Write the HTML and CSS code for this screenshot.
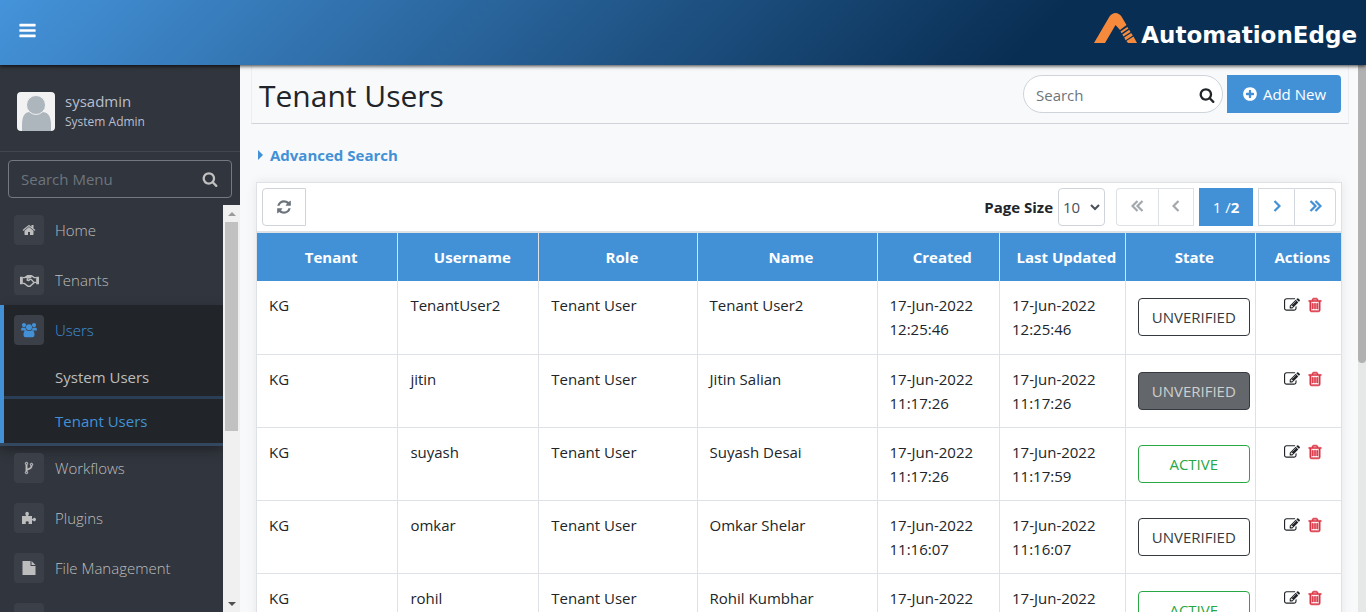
FILE: index.html
```html
<!DOCTYPE html>
<html lang="en">
<head>
<meta charset="utf-8">
<title>Tenant Users</title>
<link rel="stylesheet" href="styles.css">
</head>
<body>
<svg class="sprite" aria-hidden="true">
  <symbol id="bars" viewBox="0 0 1792 1792"><path d="M1664 1344v128q0 26-19 45t-45 19h-1408q-26 0-45-19t-19-45v-128q0-26 19-45t45-19h1408q26 0 45 19t19 45zm0-512v128q0 26-19 45t-45 19h-1408q-26 0-45-19t-19-45v-128q0-26 19-45t45-19h1408q26 0 45 19t19 45zm0-512v128q0 26-19 45t-45 19h-1408q-26 0-45-19t-19-45v-128q0-26 19-45t45-19h1408q26 0 45 19t19 45z"/></symbol>
  <symbol id="search" viewBox="0 0 1792 1792"><path d="M1216 832q0-185-131.5-316.5t-316.5-131.5-316.5 131.5-131.5 316.5 131.5 316.5 316.5 131.5 316.5-131.5 131.5-316.5zm512 832q0 52-38 90t-90 38q-54 0-90-38l-343-342q-179 124-399 124-143 0-273.5-55.5t-225-150-150-225-55.5-273.5 55.5-273.5 150-225 225-150 273.5-55.5 273.5 55.5 225 150 150 225 55.5 273.5q0 220-124 399l343 343q37 37 37 90z"/></symbol>
  <symbol id="home" viewBox="0 0 1792 1792"><path d="M1472 992v480q0 26-19 45t-45 19h-384v-384h-256v384h-384q-26 0-45-19t-19-45v-480q0-1 .5-3t.5-3l575-474 575 474q1 2 1 6zm223-69l-62 74q-8 9-21 11h-3q-13 0-21-7l-692-577-692 577q-12 8-24 7-13-2-21-11l-62-74q-8-10-7-23.5t11-21.5l719-599q32-26 76-26t76 26l244 204v-195q0-14 9-23t23-9h192q14 0 23 9t9 23v408l219 182q10 8 11 21.5t-7 23.5z"/></symbol>
  <symbol id="handshake" viewBox="0 0 20 14"><path d="M0 3h3v8H0zM17 3h3v8h-3z"/><path d="M3 4h2l3-2h4l3 2h2M3 10h1.500l4 3h2l4.500-4h2M12 3.500L9 3.500 7.500 6.500c1.500 1 2.500 0 3-1L12 6l3 3.500M8.500 2L6.500 4.500" fill="none" stroke="currentColor" stroke-width="1.500"/></symbol>
  <symbol id="users" viewBox="0 0 16 15"><circle cx="3" cy="2.600" r="2.100"/><circle cx="13" cy="2.600" r="2.100"/><circle cx="8" cy="4.800" r="3"/><path d="M0 7.500Q0 4.900 1.500 4.900q1.500.8 3 .2Q4.500 6.800 5.300 8H1.200Q0 8 0 7.500zM16 7.500q0-2.600-1.500-2.600-1.500.8-3 .2 0 1.700-.8 2.900h4.100q1.200 0 1.200-.5zM2.500 12.500Q2.500 8 5 7.600q3 2 6 0 2.500.4 2.500 4.900 0 2.200-2 2.200h-7q-2 0-2-2.200z"/></symbol>
  <symbol id="fork" viewBox="0 0 1792 1792"><path d="M672 1472q0-40-28-68t-68-28-68 28-28 68 28 68 68 28 68-28 28-68zm0-1152q0-40-28-68t-68-28-68 28-28 68 28 68 68 28 68-28 28-68zm640 128q0-40-28-68t-68-28-68 28-28 68 28 68 68 28 68-28 28-68zm96 0q0 52-26 96.5t-70 69.500q-2 287-226 414-67 38-203 81-128 40-169.500 71t-41.500 100v26q44 25 70 69.500t26 96.500q0 80-56 136t-136 56-136-56-56-136q0-52 26-96.500t70-69.500v-820q-44-25-70-69.500t-26-96.500q0-80 56-136t136-56 136 56 56 136q0 52-26 96.500t-70 69.500v497q54-26 154-57 55-17 87.500-29.500t70.500-31 59-39.500 40.500-51 28-69.500 8.500-91.500q-44-25-70-69.500t-26-96.500q0-80 56-136t136-56 136 56 56 136z" stroke="currentColor" stroke-width="50"/></symbol>
  <symbol id="puzzle" viewBox="0 0 14 14"><path d="M0 5h4.200Q3.300 4 3.300 2.700 3.300.8 5.100.8t1.800 1.900Q6.900 4 6 5h4v3q1-.4 1.300-.8.700-.7 1.500-.4 1.200.4 1.200 1.700t-1.200 1.800q-.8.200-1.500-.5-.5-.4-1.300-.6V13H6.400q.4-.7.400-1.400 0-1.400-1.600-1.400t-1.600 1.400q0 .7.400 1.400H0z"/></symbol>
  <symbol id="file" viewBox="0 0 13 14"><path d="M0 0h8v5h5v9H0zM9 0l4 4H9z"/></symbol>
  <symbol id="plus" viewBox="0 0 1792 1792"><path d="M1344 960v-128q0-26-19-45t-45-19h-256v-256q0-26-19-45t-45-19h-128q-26 0-45 19t-19 45v256h-256q-26 0-45 19t-19 45v128q0 26 19 45t45 19h256v256q0 26 19 45t45 19h128q26 0 45-19t19-45v-256h256q26 0 45-19t19-45zm320-64q0 209-103 385.500t-279.500 279.500-385.500 103-385.500-103-279.500-279.500-103-385.500 103-385.500 279.500-279.500 385.500-103 385.500 103 279.500 279.500 103 385.500z"/></symbol>
  <symbol id="refresh" viewBox="0 0 1792 1792"><path d="M1639 1056q0 5-1 7-64 268-268 434.500t-478 166.500q-146 0-282.500-55t-243.500-157l-129 129q-19 19-45 19t-45-19-19-45v-448q0-26 19-45t45-19h448q26 0 45 19t19 45-19 45l-137 137q71 66 161 102t187 36q134 0 250-65t186-179q11-17 53-117 8-23 30-23h192q13 0 22.500 9.500t9.500 22.500zm25-800v448q0 26-19 45t-45 19h-448q-26 0-45-19t-19-45 19-45l138-138q-148-137-349-137-134 0-250 65t-186 179q-11 17-53 117-8 23-30 23h-199q-13 0-22.500-9.500t-9.500-22.500v-7q65-268 270-434.500t480-166.500q146 0 284 55.500t245 156.500l130-129q19-19 45-19t45 19 19 45z"/></symbol>
  <symbol id="edit" viewBox="0 0 1792 1792"><path d="M888 1184l116-116-152-152-116 116v56h96v96h56zm440-720q-16-16-33 1l-350 350q-17 17-1 33t33-1l350-350q17-17 1-33zm80 594v190q0 119-84.500 203.500t-203.500 84.500h-832q-119 0-203.500-84.500t-84.500-203.500v-832q0-119 84.500-203.500t203.500-84.500h832q63 0 117 25 15 7 18 23 3 17-9 29l-49 49q-14 14-32 8-23-6-45-6h-832q-66 0-113 47t-47 113v832q0 66 47 113t113 47h832q66 0 113-47t47-113v-126q0-13 9-22l64-64q15-15 35-7t20 29zm-96-738l288 288-672 672h-288v-288zm444 132l-92 92-288-288 92-92q28-28 68-28t68 28l152 152q28 28 28 68t-28 68z"/></symbol>
  <symbol id="trash" viewBox="0 0 1792 1792"><path d="M704 736v576q0 14-9 23t-23 9h-64q-14 0-23-9t-9-23v-576q0-14 9-23t23-9h64q14 0 23 9t9 23zm256 0v576q0 14-9 23t-23 9h-64q-14 0-23-9t-9-23v-576q0-14 9-23t23-9h64q14 0 23 9t9 23zm256 0v576q0 14-9 23t-23 9h-64q-14 0-23-9t-9-23v-576q0-14 9-23t23-9h64q14 0 23 9t9 23zm128 724v-948h-896v948q0 22 7 40.500t14.500 27 10.500 8.500h832q3 0 10.500-8.500t14.500-27 7-40.500zm-672-1076h448l-48-117q-7-9-17-11h-317q-10 2-17 11zm928 32v64q0 14-9 23t-23 9h-96v948q0 83-47 143.500t-113 60.500h-832q-66 0-113-58.500t-47-141.500v-952h-96q-14 0-23-9t-9-23v-64q0-14 9-23t23-9h309l70-167q15-37 54-63t79-26h320q40 0 79 26t54 63l70 167h309q14 0 23 9t9 23z" stroke="currentColor" stroke-width="70"/></symbol>
  <symbol id="chev" viewBox="0 0 8 12"><path d="M1.500 1L6.500 6l-5 5" fill="none" stroke="currentColor" stroke-width="2.200"/></symbol>
  <symbol id="chevs" viewBox="0 0 13 12"><path d="M1.500 1L6.500 6l-5 5M6.500 1L11.500 6l-5 5" fill="none" stroke="currentColor" stroke-width="2.200"/></symbol>
</svg>

<header class="topbar">
  <button class="menu-toggle" aria-label="Toggle menu"><svg class="icon-19"><use href="#bars"/></svg></button>
  <a class="brand" href="#">
    <svg class="brand-mark" viewBox="0 0 43 30" aria-hidden="true"><path d="M0 30L15.500 3.500Q18 0 21.500 0t6 3.500L32.500 12l-6.500 5-4.500-5L11 30z"/><path d="M26.500 18.500l6.800-4.600 1.100 1.700-6.900 4.700zM28.300 21.500l6.900-4.700 1.300 2.100-7 4.700zM30.200 24.600l7-4.600 1.600 2.600-7.200 4.600zM32.400 28l7.100-4.500L43 30h-9z"/></svg>
    <span class="brand-name">AutomationEdge</span>
  </a>
</header>

<div class="shell">
  <aside class="sidebar">
    <div class="profile">
      <svg class="avatar" viewBox="0 0 38 39" aria-hidden="true"><rect width="38" height="39" fill="#f2f2f2"/><path d="M5 39V33Q5 20 13 20h12q9 0 9 13v6z" fill="#adb5bd"/><circle cx="19" cy="13" r="9.500" fill="#adb5bd" stroke="#f2f2f2"/></svg>
      <div>
        <div class="profile-name">sysadmin</div>
        <div class="profile-role">System Admin</div>
      </div>
    </div>
    <div class="menu-search">
      <input type="text" placeholder="Search Menu" aria-label="Search Menu">
      <svg class="icon-16"><use href="#search"/></svg>
    </div>
    <div class="menu-area">
      <nav class="menu">
        <a class="item" href="#"><span class="tile"><svg class="icon-14"><use href="#home"/></svg></span>Home</a>
        <a class="item" href="#"><span class="tile"><svg class="icon-19"><use href="#handshake"/></svg></span>Tenants</a>
        <div class="group">
          <a class="item on" href="#"><span class="tile"><svg class="icon-16"><use href="#users"/></svg></span>Users</a>
          <a class="sub" href="#">System Users</a>
          <a class="sub on" href="#">Tenant Users</a>
        </div>
        <a class="item" href="#"><span class="tile"><svg class="icon-14"><use href="#fork"/></svg></span>Workflows</a>
        <a class="item" href="#"><span class="tile"><svg class="icon-14"><use href="#puzzle"/></svg></span>Plugins</a>
        <a class="item" href="#"><span class="tile"><svg class="icon-14"><use href="#file"/></svg></span>File Management</a>
        <a class="item" href="#"><span class="tile"></span></a>
      </nav>
      <div class="menu-scroll" aria-hidden="true"><i class="arrow up"></i><i class="thumb"></i><i class="arrow down"></i></div>
    </div>
  </aside>

  <main class="content">
    <div class="titlebar">
      <h1>Tenant Users</h1>
      <div class="search-box">
        <input type="text" placeholder="Search" aria-label="Search">
        <svg class="icon-16"><use href="#search"/></svg>
      </div>
      <button class="add"><svg class="icon-16"><use href="#plus"/></svg>Add New</button>
    </div>
    <a class="advanced" href="#">Advanced Search</a>
    <section class="card">
      <div class="toolbar">
        <button class="refresh" aria-label="Refresh"><svg class="icon-16"><use href="#refresh"/></svg></button>
        <label for="size">Page Size</label>
        <span class="size-wrap">
          <select id="size"><option>10</option></select>
          <svg class="caret" viewBox="0 0 10 7"><path d="M1 1l4 4 4-4" fill="none" stroke="currentColor" stroke-width="2"/></svg>
        </span>
        <div class="pager">
          <button class="off first" aria-label="First page"><svg class="chevs flip"><use href="#chevs"/></svg></button>
          <button class="off" aria-label="Previous page"><svg class="chev flip"><use href="#chev"/></svg></button>
          <span class="current">1 /<b>2</b></span>
          <button aria-label="Next page"><svg class="chev"><use href="#chev"/></svg></button>
          <button class="last" aria-label="Last page"><svg class="chevs"><use href="#chevs"/></svg></button>
        </div>
      </div>
      <table>
        <colgroup><col class="c-tenant"><col class="c-user"><col class="c-role"><col class="c-name"><col class="c-created"><col class="c-updated"><col class="c-state"><col class="c-actions"></colgroup>
        <thead><tr><th>Tenant</th><th>Username</th><th>Role</th><th>Name</th><th>Created</th><th>Last Updated</th><th>State</th><th>Actions</th></tr></thead>
        <tbody>
          <tr><td>KG</td><td>TenantUser2</td><td>Tenant User</td><td>Tenant User2</td><td>17-Jun-2022 12:25:46</td><td>17-Jun-2022 12:25:46</td><td class="state-cell"><button class="state">UNVERIFIED</button></td><td class="actions"><button aria-label="Edit"><svg class="icon-16"><use href="#edit"/></svg></button><button class="del" aria-label="Delete"><svg class="icon-16"><use href="#trash"/></svg></button></td></tr>
          <tr><td>KG</td><td>jitin</td><td>Tenant User</td><td>Jitin Salian</td><td>17-Jun-2022 11:17:26</td><td>17-Jun-2022 11:17:26</td><td class="state-cell"><button class="state dim">UNVERIFIED</button></td><td class="actions"><button aria-label="Edit"><svg class="icon-16"><use href="#edit"/></svg></button><button class="del" aria-label="Delete"><svg class="icon-16"><use href="#trash"/></svg></button></td></tr>
          <tr><td>KG</td><td>suyash</td><td>Tenant User</td><td>Suyash Desai</td><td>17-Jun-2022 11:17:26</td><td>17-Jun-2022 11:17:59</td><td class="state-cell"><button class="state active">ACTIVE</button></td><td class="actions"><button aria-label="Edit"><svg class="icon-16"><use href="#edit"/></svg></button><button class="del" aria-label="Delete"><svg class="icon-16"><use href="#trash"/></svg></button></td></tr>
          <tr><td>KG</td><td>omkar</td><td>Tenant User</td><td>Omkar Shelar</td><td>17-Jun-2022 11:16:07</td><td>17-Jun-2022 11:16:07</td><td class="state-cell"><button class="state">UNVERIFIED</button></td><td class="actions"><button aria-label="Edit"><svg class="icon-16"><use href="#edit"/></svg></button><button class="del" aria-label="Delete"><svg class="icon-16"><use href="#trash"/></svg></button></td></tr>
          <tr><td>KG</td><td>rohil</td><td>Tenant User</td><td>Rohil Kumbhar</td><td>17-Jun-2022</td><td>17-Jun-2022</td><td class="state-cell"><button class="state active">ACTIVE</button></td><td class="actions"><button aria-label="Edit"><svg class="icon-16"><use href="#edit"/></svg></button><button class="del" aria-label="Delete"><svg class="icon-16"><use href="#trash"/></svg></button></td></tr>
        </tbody>
      </table>
    </section>
  </main>
  <div class="page-scroll" aria-hidden="true"><i></i></div>
</div>
</body>
</html>
```

FILE: styles.css
```css
* { box-sizing: border-box; }
body {
  margin: 0;
  height: 100vh;
  overflow: hidden;
  display: flex;
  flex-direction: column;
  background: #f8f9fb;
  color: #212529;
  font: 15px/24px "Open Sans", "Noto Sans", sans-serif;
}
a { color: inherit; text-decoration: none; }
button, input, select { font: inherit; color: inherit; margin: 0; }
button { padding: 0; border: 0; background: none; display: flex; align-items: center; justify-content: center; }
svg { display: block; fill: currentColor; flex: none; }
.sprite { position: absolute; width: 0; height: 0; }
.icon-14 { width: 14px; height: 14px; }
.icon-16 { width: 16px; height: 16px; }
.icon-19 { width: 19px; height: 19px; }

.topbar {
  flex: none;
  height: 65px;
  padding: 0 9px 4px 18px;
  display: flex;
  align-items: center;
  justify-content: space-between;
  background: linear-gradient(135deg, #4593da, #092e53 75%);
  box-shadow: 0 1px 4px #000c;
  z-index: 1;
  color: #fff;
}
.brand { display: flex; align-items: flex-end; gap: 4px; padding-bottom: 6px; }
.brand-mark { width: 43px; height: 30px; color: #f58a3c; }
.brand-name { font: bold 23px/16px "DejaVu Sans", sans-serif; }

.shell { flex: 1; min-height: 0; display: flex; overflow: hidden; }
.sidebar {
  flex: none;
  width: 240px;
  display: flex;
  flex-direction: column;
  background: #31353d;
  color: #b8bfce;
}
.profile {
  flex: none;
  height: 87px;
  padding: 6px 17px 0;
  display: flex;
  align-items: center;
  gap: 10px;
  border-bottom: 1px solid #42464f;
}
.avatar { width: 38px; height: 39px; border-radius: 4px; }
.profile-name { line-height: 22px; }
.profile-role { font-size: 12px; line-height: 20px; }
.menu-search {
  flex: none;
  height: 38px;
  margin: 8px 8px 7px;
  padding: 0 13px 0 12px;
  display: flex;
  align-items: center;
  border: 1px solid #747981;
  border-radius: 4px;
  color: #c0c0c0;
}
input { flex: 1; width: 0; padding: 0; border: 0; outline: 0; background: none; }
input::placeholder { color: #6c757d; opacity: 1; }
.menu-area { flex: 1; min-height: 0; display: flex; }
.menu { flex: 1; overflow: hidden; font-weight: 300; color: #bdbdbd; }
.item { height: 50px; padding-left: 14px; display: flex; align-items: center; gap: 11px; }
.tile {
  width: 30px;
  height: 30px;
  display: flex;
  align-items: center;
  justify-content: center;
  border-radius: 4px;
  background: #3a3f48;
}
.group {
  background: #212529;
  border-left: 4px solid #4291d7;
  box-shadow: 0 3px 0 #33485f, 0 6px 12px #0006;
}
.group .item { padding-left: 10px; }
.sub { height: 44px; padding-left: 51px; display: flex; align-items: center; font-weight: 400; }
.sub:not(.on) { border-bottom: 3px solid #2a3f55; padding-top: 3px; }
.on { color: #4291d7; }
.menu-scroll {
  flex: none;
  width: 17px;
  padding: 6px 2px;
  display: flex;
  flex-direction: column;
  align-items: center;
  background: #f0f0f0;
}
.menu-scroll .thumb { width: 13px; height: 209px; margin-top: 6px; background: #c1c1c1; }
.arrow { border: 4px solid transparent; }
.up { border-top: 0; border-bottom-color: #9a9a9a; height: 5px; }
.down { border-bottom: 0; border-top-color: #505050; margin-top: auto; }

.content { flex: 1; min-width: 0; }
.titlebar {
  height: 59px;
  margin: 0 9px 0 11px;
  padding: 10px 7px 0;
  display: flex;
  align-items: flex-start;
  border: 1px solid #eceef1;
  border-width: 0 1px;
  border-bottom: 1px solid #d0d4d9;
}
h1 { flex: 1; margin: 0; font-size: 30px; line-height: 42px; font-weight: 500; }
.search-box {
  flex: none;
  width: 200px;
  height: 38px;
  margin-right: 4px;
  padding: 2px 7px 0 12px;
  display: flex;
  align-items: center;
  border: 1px solid #ced4da;
  border-radius: 19px;
  background: #fff;
}
.add {
  flex: none;
  width: 114px;
  height: 38px;
  gap: 5px;
  border-radius: 0 4px 4px 0;
  background: #4291d7;
  color: #fff;
}
.advanced {
  height: 58px;
  padding: 4px 18px 0;
  display: flex;
  align-items: center;
  gap: 7px;
  color: #4291d7;
  font-weight: 700;
}
.advanced::before { content: ""; border: 5px solid transparent; border-left-color: #4291d7; border-right: 0; }
.card {
  margin: 0 16px;
  border: 1px solid #dee2e6;
  background: #fff;
  box-shadow: 0 0 10px #00000014;
}
.toolbar { height: 48px; padding: 0 5px; display: flex; align-items: center; }
.refresh { width: 44px; height: 38px; margin-right: auto; border: 1px solid #ced4da; border-radius: 4px 0 0 4px; color: #6c757d; }
.toolbar label { font-weight: 700; margin-right: 5px; }
.size-wrap { position: relative; }
select {
  display: block;
  width: 47px;
  height: 38px;
  padding: 0 4px;
  appearance: none;
  border: 1px solid #ced4da;
  border-radius: 4px;
  background: #fff;
  color: #495057;
}
.caret { position: absolute; right: 5px; top: 16px; width: 10px; height: 7px; pointer-events: none; color: #495057; }
.pager { margin-left: 11px; display: flex; color: #4291d7; }
.pager button { width: 36px; height: 38px; padding-bottom: 2px; border: 1px solid #d3d8de; background: #fff; }
.pager .off { color: #a3a8ad; border-color: #dee2e6; }
.pager .first { width: 42px; border-right: 0; border-radius: 4px 0 0 4px; }
.pager .last { width: 42px; border-radius: 0 4px 4px 0; border-left: 1px solid #d3d8de; }
.pager .current + button { border-right: 0; }
.current { width: 54px; margin: 0 5px; line-height: 38px; text-align: center; background: #4291d7; color: #fff; }
.chev { width: 8px; height: 12px; }
.chevs { width: 13px; height: 12px; }
.flip { transform: scaleX(-1); }

table { width: 100%; table-layout: fixed; border-collapse: collapse; border-top: 2px solid #dee2e6; }
.c-tenant { width: 13%; }
.c-user { width: 13%; }
.c-role { width: 14.6%; }
.c-name { width: 16.6%; }
.c-created { width: 11.3%; }
.c-updated { width: 11.6%; }
.c-state { width: 12%; }
.c-actions { width: 7.9%; }
th {
  height: 49px;
  padding: 0 0 0 8px;
  background: #4291d7;
  color: #fff;
  font-weight: 700;
  white-space: nowrap;
  border-right: 1px solid #dee2e6;
}
thead tr { box-shadow: inset 0 4px 4px -2px #0003; }
td {
  height: 73px;
  padding: 12px;
  vertical-align: top;
  border-right: 1px solid #dee2e6;
  border-bottom: 1px solid #dee2e6;
}
th:last-child, td:last-child { border-right: 0; }
td.state-cell { padding-right: 5px; }
.state {
  width: 100%;
  height: 38px;
  margin-top: 5px;
  border: 1px solid #343a40;
  border-radius: 4px;
  color: #343a40;
}
.dim { background: #63676b; color: #cfcfcf; }
.state.active { border-color: #28a745; color: #28a745; }
td.actions { padding: 16px 0 0 28px; }
.actions button { display: inline-flex; vertical-align: top; margin-right: 7px; color: #212529; }
.actions .del { color: #dc3545; margin: 0; }
.page-scroll { flex: none; width: 8px; background: #e6e8e8; }
.page-scroll i { display: block; height: 298px; border-radius: 0 0 4px 4px; background: #b1b1b1; }
```
